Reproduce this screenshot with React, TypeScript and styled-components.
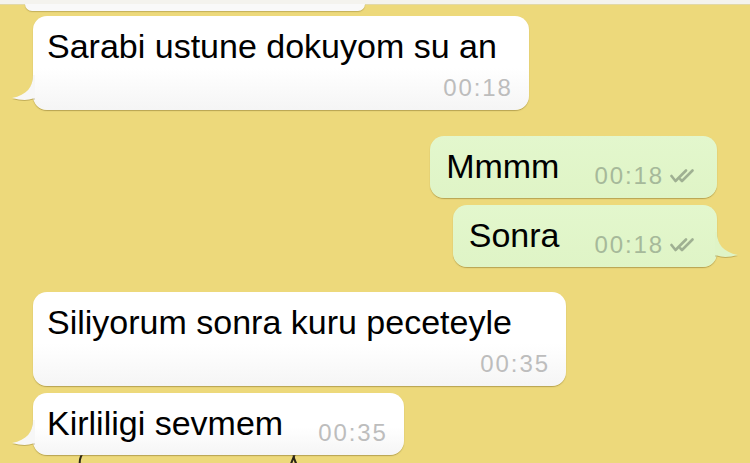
import React from "react";
import styled, { createGlobalStyle } from "styled-components";

const Global = createGlobalStyle`
  html, body { margin: 0; padding: 0; }
  body {
    width: 750px;
    height: 463px;
    overflow: hidden;
    background: #edd97b;
    font-family: "Liberation Sans", Arial, Helvetica, sans-serif;
  }
`;

const Screen = styled.div`
  position: relative;
  width: 750px;
  height: 463px;
  overflow: hidden;
  background: #edd97b;
  display: flex;
  flex-direction: column;
`;

const Doodles = styled.svg`
  position: absolute;
  left: 0;
  top: 0;
  width: 750px;
  height: 463px;
  pointer-events: none;
`;

const TopStrip = styled.div`
  height: 4px;
  background: #f4f3ee;
  border-bottom: 1px solid #e2d9a8;
  flex: none;
`;

const PrevEdge = styled.div`
  width: 340px;
  height: 7px;
  margin-left: 25px;
  margin-top: -1px;
  background: #f9f9f9;
  border-radius: 0 0 14px 14px;
  box-shadow: 0 1px 1px rgba(120, 100, 30, 0.35);
  flex: none;
`;

const Thread = styled.div`
  position: relative;
  display: flex;
  flex-direction: column;
  padding: 5px 33px 0 33px;
`;

const Row = styled.div<{ $out?: boolean; $gap: number }>`
  display: flex;
  justify-content: ${(p) => (p.$out ? "flex-end" : "flex-start")};
  margin-top: ${(p) => p.$gap}px;
`;

const Bubble = styled.div<{ $out?: boolean; $stacked?: boolean }>`
  position: relative;
  display: flex;
  flex-direction: ${(p) => (p.$stacked ? "column" : "row")};
  align-items: flex-end;
  padding: ${(p) => (p.$out ? "11px 19px 8px 16px" : "11px 16px 8px 14px")};
  border-radius: 14px;
  background: ${(p) =>
    p.$out
      ? "linear-gradient(#e3f7cd, #dff4c6)"
      : "linear-gradient(#ffffff 55%, #f5f5f5)"};
  box-shadow: 0 1px 1px rgba(130, 110, 40, 0.5);
`;

const Text = styled.div<{ $stacked?: boolean; $reserve: number }>`
  font-size: 34px;
  line-height: 38px;
  color: #000000;
  white-space: nowrap;
  align-self: ${(p) => (p.$stacked ? "flex-start" : "auto")};
  margin-bottom: ${(p) => (p.$stacked ? "9px" : "5px")};
  margin-right: ${(p) => p.$reserve}px;
`;

const Meta = styled.div`
  display: flex;
  align-items: center;
  gap: 6px;
  height: 28px;
`;

const Time = styled.span<{ $out?: boolean }>`
  font-size: 24px;
  line-height: 28px;
  letter-spacing: 1.9px;
  color: ${(p) => (p.$out ? "#a6b99a" : "#bdbdbd")};
  white-space: nowrap;
`;

const Tail = styled.svg<{ $out?: boolean }>`
  position: absolute;
  bottom: 8px;
  width: 23px;
  height: 27px;
  ${(p) => (p.$out ? "right: -21px;" : "left: -21px;")}
  filter: drop-shadow(0 1px 0.5px rgba(130, 110, 40, 0.4));
`;

function TailShape({ out }: { out?: boolean }) {
  const fill = out ? "#dff4c6" : "#f7f7f7";
  return (
    <Tail $out={out} viewBox="0 0 23 27">
      <path
        d={
          out
            ? "M0 0 L2 0 C2 12 8 20 23 23 C14 25.5 7 25.5 2 23.5 L0 23.5 Z"
            : "M23 0 L21 0 C21 12 15 20 0 23 C9 25.5 16 25.5 21 23.5 L23 23.5 Z"
        }
        fill={fill}
      />
    </Tail>
  );
}

const Checks = () => (
  <svg width="28" height="14" viewBox="0 0 28 14">
    <path
      d="M1.5 7 L5.5 12 L16 1.5 M10.5 10.5 L12 12 L22.5 1.5"
      fill="none"
      stroke="#9fb092"
      strokeWidth="2.6"
      strokeLinecap="round"
      strokeLinejoin="round"
    />
  </svg>
);

type Msg = {
  text: string;
  time: string;
  out?: boolean;
  stacked?: boolean;
  tail?: boolean;
  reserve: number;
  gap: number;
};

const messages: Msg[] = [
  { text: "Sarabi ustune dokuyom su an", time: "00:18", stacked: true, tail: true, reserve: 16, gap: 0 },
  { text: "Mmmm", time: "00:18", out: true, reserve: 35, gap: 26 },
  { text: "Sonra", time: "00:18", out: true, tail: true, reserve: 35, gap: 7 },
  { text: "Siliyorum sonra kuru peceteyle", time: "00:35", stacked: true, reserve: 38, gap: 25 },
  { text: "Kirliligi sevmem", time: "00:35", tail: true, reserve: 35, gap: 7 },
];

export default function App() {
  return (
    <>
      <Global />
      <Screen>
        <Doodles viewBox="0 0 750 463">
          <path
            d="M84 452 C80 456 79 460 80 466"
            fill="none"
            stroke="#2a2416"
            strokeWidth="2"
            strokeLinecap="round"
          />
          <path
            d="M288 470 C292 462 296 452 298 444 C300 437 297 435 295 441 C292 452 293 462 300 468"
            fill="none"
            stroke="#2a2416"
            strokeWidth="2"
            strokeLinecap="round"
          />
        </Doodles>
        <TopStrip />
        <PrevEdge />
        <Thread>
          {messages.map((m, i) => (
            <Row key={i} $out={m.out} $gap={m.gap}>
              <Bubble $out={m.out} $stacked={m.stacked}>
                {m.tail && <TailShape out={m.out} />}
                <Text $stacked={m.stacked} $reserve={m.reserve}>
                  {m.text}
                </Text>
                <Meta>
                  <Time $out={m.out}>{m.time}</Time>
                  {m.out && <Checks />}
                </Meta>
              </Bubble>
            </Row>
          ))}
        </Thread>
      </Screen>
    </>
  );
}
